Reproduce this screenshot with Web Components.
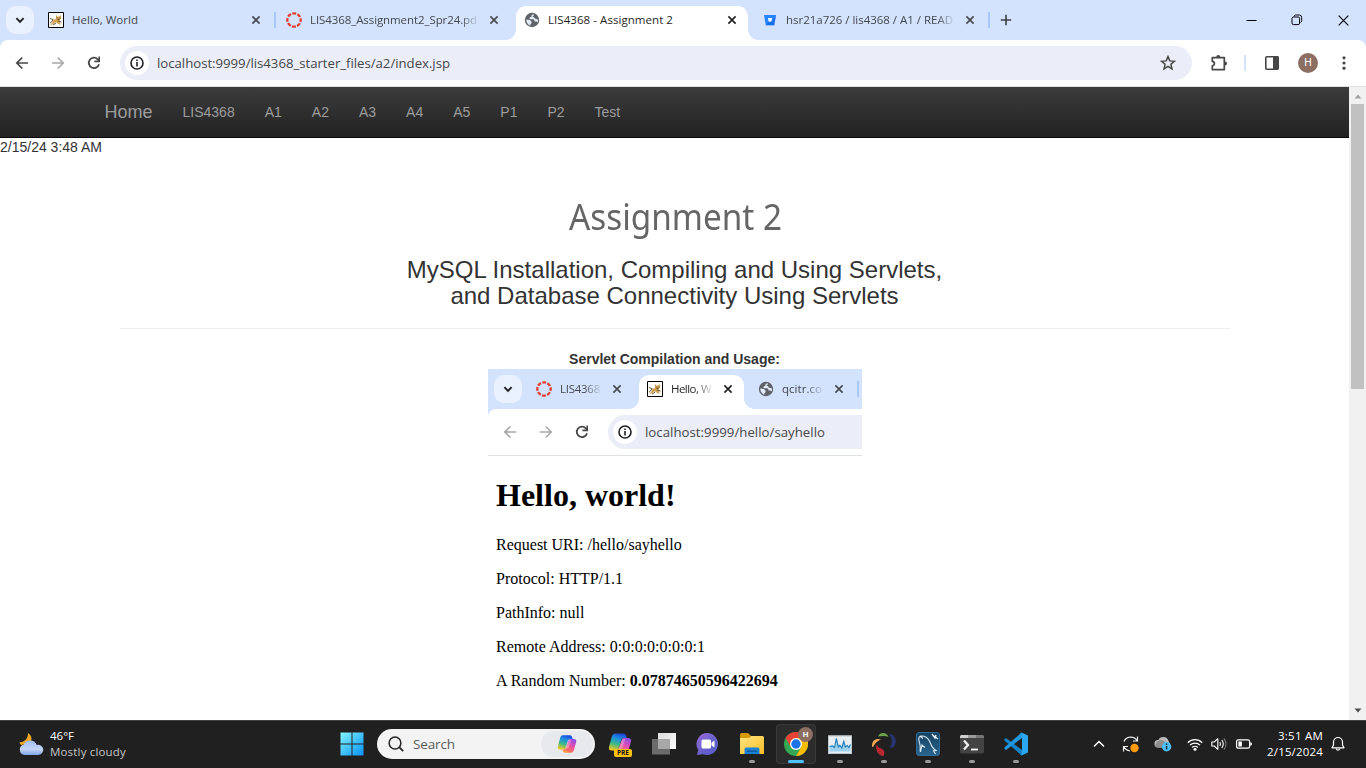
<!DOCTYPE html>
<html lang="en">
<head>
<meta charset="utf-8">
<title>LIS4368 - Assignment 2</title>
<style>
html,body{margin:0;height:100%;overflow:hidden;background:#fff}
</style>
</head>
<body>
<desktop-screen></desktop-screen>
<script>
const UI = '"Open Sans","Noto Sans",sans-serif';

const define = (name, css, html, ready) => {
  const tpl = document.createElement('template');
  tpl.innerHTML = `<style>*{box-sizing:border-box}${css}</style>${html}`;
  customElements.define(name, class extends HTMLElement {
    connectedCallback() {
      if (this.shadowRoot) return;
      this.attachShadow({mode: 'open'}).appendChild(tpl.content.cloneNode(true));
      if (ready) ready(this, this.shadowRoot);
    }
  });
};

/* Icons: name -> [width, height, markup] */
const copilot = `
  <path d="M7 1.500h8.500q2 0 2.600 2l.7 2.500h-2.800q-2.200 0-2.900 2.200L10.500 16.500Q9.800 18.500 8 18.500H4Q.2 18.500 1 15L4 4Q4.800 1.500 7 1.500z" fill="url(#cpa)"/>
  <path d="M17 22.500H9.500q-2 0-2.600-2l-.5-2H8q2.200 0 2.900-2.200l2.700-8.100Q14.300 6 16 6h4q3.800 0 3 3.500L20 20Q19.200 22.500 17 22.500z" fill="url(#cpb)"/>
  <path d="M14.500 6.800h2.800L14.700 15q-.8 2.600-2.800 2.600H9.500z" fill="#fff" opacity=".28"/>
  <defs><linearGradient id="cpa" x1=".6" y1="0" x2=".3" y2="1"><stop offset="0" stop-color="#1b49d6"/><stop offset=".3" stop-color="#1d8fe0"/><stop offset=".62" stop-color="#3ab98a"/><stop offset="1" stop-color="#f4c91d"/></linearGradient>
  <linearGradient id="cpb" x1=".8" y1="0" x2=".3" y2="1"><stop offset="0" stop-color="#8d4be8"/><stop offset=".45" stop-color="#e64fae"/><stop offset=".8" stop-color="#fa6d63"/><stop offset="1" stop-color="#ff9d4a"/></linearGradient></defs>`;
const ICONS = {
  chev: [12, 12, '<path d="M2.400 4.200 6 7.800l3.600-3.600" fill="none" stroke="#1f1f1f" stroke-width="1.900"/>'],
  close: [10, 10, '<path d="m1.400 1.400 7.200 7.200m0-7.200L1.400 8.600" stroke="currentColor" stroke-width="1.600"/>'],
  plus: [12, 12, '<path d="M6 .8v10.400M.8 6h10.400" stroke="#3c4043" stroke-width="1.600"/>'],
  back: [14, 14, '<path d="M13 7H2M7.300 1.500 1.800 7l5.500 5.500" fill="none" stroke="currentColor" stroke-width="1.700"/>'],
  fwd: [14, 14, '<path d="M1 7h11M6.700 1.500 12.200 7l-5.500 5.500" fill="none" stroke="#a8a8a8" stroke-width="1.700"/>'],
  reload: [14, 14, '<path d="M12 8.200A5.200 5.200 0 1 1 10.800 3.300L12.600 5" fill="none" stroke="#474747" stroke-width="1.800"/><path d="M13 .6v5.600H7.400V4.600h4V.6z" fill="#474747"/>'],
  info: [14, 14, '<circle cx="7" cy="7" r="6" fill="none" stroke="#202124" stroke-width="1.600"/><path d="M7 6.100v4.300M7 3.500v1.600" stroke="#202124" stroke-width="1.600"/>'],
  star: [16, 16, '<path d="m8 1.600 1.800 4.300 4.600.4-3.500 3 1.100 4.600L8 11.400l-4 2.500 1.100-4.600-3.500-3 4.600-.4z" fill="none" stroke="#474747" stroke-width="1.500"/>'],
  puzzle: [18, 18, '<path d="M2.300 3.600h12v12h-12v-3.800c2.800-.4 2.800-4 0-4.400z" fill="none" stroke="#474747" stroke-width="1.700" stroke-linejoin="round"/><path d="M6.300 3a2 2 0 0 1 4 0zM15 7.500a2 2 0 0 1 0 4z" fill="#474747"/>'],
  panel: [16, 16, '<rect x="1.800" y="1.800" width="12.400" height="12.400" rx="1" fill="none" stroke="#474747" stroke-width="1.600"/><path d="M9 1.500h5.500v13H9z" fill="#474747"/>'],
  dots: [4, 16, '<g fill="#474747"><circle cx="2" cy="2.800" r="1.600"/><circle cx="2" cy="8" r="1.600"/><circle cx="2" cy="13.200" r="1.600"/></g>'],
  min: [11, 11, '<path d="M.5 5.500h10" stroke="#000"/>'],
  restore: [12, 12, '<rect x="1" y="3" width="7.600" height="7.600" rx="1.500" fill="none" stroke="#000"/><path d="M3 2.600C3.200 1.500 3.800 1 5 1h3.200Q10.700 1 10.700 3.500v3Q10.700 8 9.500 8.600" fill="none" stroke="#000"/>'],
  winx: [11, 11, '<path d="m.7.7 9.600 9.600m0-9.600L.7 10.300" stroke="#000" stroke-width="1.100"/>'],
  tomcat: [16, 16, '<path d="M.5.500h15v15H.5z" fill="#fff" stroke="#000"/><path d="M8 3l1.300 1.500h2L13 3l.2 3.400L11.800 8l.8 4.800-2-.6L8 10.200 4.500 12.600 2 13l2.600-2.500.8-2.800L7.900 7z" fill="#d2a352"/><path d="M2 6.500 5 7.600 3.600 10 2 11.200M5 13l3-1.700M9 5.500l1 1.200M12 5.500v1M9.500 7.600l2-.2M10 9l3.500 1" fill="none" stroke="#594a31" stroke-width=".9"/>'],
  canvas: [16, 16, '<circle cx="8" cy="8" r="6.700" fill="none" stroke="#e43d30" stroke-width="2.300" stroke-dasharray="3.860 1.402" stroke-dashoffset="1.930"/>'],
  globe: [16, 16, '<circle cx="8" cy="8" r="7.200" fill="#5f6368"/><path d="M8.800 2.300 7.400 3.400v1.300L5.600 5.500v1.700h3.900l1 1.300v1h2.100l1 .9q.5-1.200.5-2.600L12.500 7l-1.800-.4-.7-1.600-1.600.1 1.800-2.400zM2.200 7.600l3.600.4 1.700 1.600v1.600l-1.100 1v1.600Q2.300 12 2.200 7.600z" fill="#e4ecfa"/>'],
  bucket: [16, 16, '<path d="M2 3h12l-1.800 10.300H3.800z" fill="#2684ff"/><path d="M9.600 10.300 14 3.200 12.200 13.300H3.800l2.600-3z" fill="#0d5fe0" opacity=".55"/><path d="M6 6h4l-.6 3.600H6.600z" fill="#fff"/>'],
  up: [8, 5, '<path d="M4 .5 7.500 4.500h-7z" fill="#a3a3a3"/>'],
  down: [8, 5, '<path d="M.5.500h7L4 4.500z" fill="#505050"/>'],
  weather: [26, 26, '<path d="M10 2c4 2.500 4.500 7 2 10L3 14 1.200 11.500C6 11.500 10 8 10 2z" fill="#f5a623"/><path d="M6.500 24a5.300 5.300 0 0 1-.7-10.400A7 7 0 0 1 18.800 14 5.100 5.100 0 1 1 20 24z" fill="url(#wc)"/><defs><linearGradient id="wc" x1="0" y1="0" x2="0" y2="1"><stop stop-color="#9fbdf0"/><stop offset=".6" stop-color="#c4d6f7"/><stop offset="1" stop-color="#7fa4e8"/></linearGradient></defs>'],
  windows: [24, 24, '<path d="M.5.500h11v11H.5zM12.500.5h11v11h-11zM.5 12.500h11v11H.5zM12.500 12.500h11v11h-11z" fill="url(#wl)"/><defs><linearGradient id="wl" x1="0" y1="0" x2="1" y2="1"><stop stop-color="#84f5ff"/><stop offset=".5" stop-color="#43c2fb"/><stop offset="1" stop-color="#0692f5"/></linearGradient></defs>'],
  search: [16, 16, '<circle cx="7" cy="7" r="5.900" fill="none" stroke="#262626" stroke-width="1.500"/><path d="m11.200 11.200 4 4" stroke="#262626" stroke-width="1.800"/>'],
  copilot: [24, 24, copilot],
  taskview: [24, 24, '<path d="M6 1h18v16H6z" fill="url(#tv)"/><path d="M0 7h18v15.500H0z" fill="#737373" opacity=".9"/><path d="M6 7h12v10H6z" fill="#a7a7a7"/><defs><linearGradient id="tv" x1="0" y1="0" x2="1" y2="1"><stop stop-color="#ddd"/><stop offset="1" stop-color="#fff"/></linearGradient></defs>'],
  chat: [24, 24, '<path d="M12 1A11 11 0 1 1 7 22.200L1 23l1.200-5.200A11 11 0 0 1 12 1z" fill="url(#ch)"/><rect x="5.500" y="7.500" width="9.500" height="9" rx="1.500" fill="#fff"/><path d="m15.500 10.800 3-2.200v7l-3-2.200z" fill="#fff"/><defs><linearGradient id="ch" x1="0" y1="0" x2="1" y2="1"><stop stop-color="#9c6ade"/><stop offset=".5" stop-color="#6c62cc"/><stop offset="1" stop-color="#5059c9"/></linearGradient></defs>'],
  explorer: [24, 24, '<path d="M0 5V2.500Q0 1 1.500 1H8l3 3-2 3H0z" fill="#d69a08"/><path d="M0 6h9l2-2h11.500Q24 4 24 5.500V22H0z" fill="url(#ex)"/><path d="M4.500 22v-4.500q0-2 2-2h11q2 0 2 2V22z" fill="#1c82d4"/><path d="M8 18.500h8q1.500 0 1.500 1.500H6.500q0-1.500 1.500-1.500z" fill="#075a9f"/><defs><linearGradient id="ex" x1="0" y1="0" x2="1" y2="1"><stop stop-color="#ffe583"/><stop offset="1" stop-color="#f9bd25"/></linearGradient></defs>'],
  chrome: [24, 24, '<circle cx="12" cy="12" r="12" fill="#34a853"/><path d="M1.600 6A12 12 0 0 1 22.400 6L12 6.500 6.800 15z" fill="#ea4335"/><path d="M22.400 6A12 12 0 0 1 12 24l5.200-9L12 6z" fill="#fbbc04"/><circle cx="12" cy="12" r="6" fill="#fff"/><circle cx="12" cy="12" r="4.700" fill="#1a73e8"/>'],
  taskman: [24, 24, '<path d="M0 3.500h24V22H0z" fill="#e9eef2"/><path d="M1.500 19.500V14l3-.5 2 1L8.500 6l2 7.500 2-1 1.500 3 2-5.500 1.500 4 2-1 1.500 1.500 1.500-2v7z" fill="#9fd3f0"/><path d="M1.500 14.500 4.500 14l2 1.500L8.300 6.500l2 8.500 1.500-1.500 2 2.500 2-6.500 1.500 5.500 2-1.500 1.500 2 1.700-3" fill="none" stroke="#2582be" stroke-width="1.200"/><path d="M.5 4h23v17.500H.5z" fill="none" stroke="#bfc6ca"/>'],
  swirl: [24, 24, '<path d="M6 4.500C8-.5 15 0 16.500 5c-3-1.500-7-1.300-10.500-.5z" fill="#6fa348"/><path d="M16.500 2C23 1.500 26 9 22 14.500c-2 2-3 1.500-4.500.5C21 11 20.500 5.500 16.500 2z" fill="#293570"/><path d="M0 15C-.5 9 3 5.500 9.500 7.500 6 8 3 11.500 1.500 14.500z" fill="#eda450"/><path d="M5 12c.5 5 5 3.500 6.800 6.500 1 2 .5 4-.5 5.500C6 24 2.500 17 5 12z" fill="#bb2730"/>'],
  mysql: [24, 24, '<rect x=".5" y=".5" width="23" height="23" rx="2.500" fill="url(#my)" stroke="#306b94"/><path d="M4.500 20c-1-3 .5-5-.8-8.500C2.500 8 2 4.500 5 4c3-.2 6.500 1.500 8.500 5 1 2.500 2 6 4.500 8l2 1.500-2.500.2L19.500 22M9 15.500 6 13l-1.500 7M4 4l3 2.500" fill="none" stroke="#dce8f0" stroke-width="1.100"/><path d="m16 2 3 4 1-3M18 4l4 3" stroke="#e6eff5" stroke-width="1.400" fill="none"/><defs><linearGradient id="my" x1="0" y1="0" x2="0" y2="1"><stop stop-color="#15405f"/><stop offset="1" stop-color="#286590"/></linearGradient></defs>'],
  terminal: [24, 24, '<rect y="3" width="24" height="18.500" rx="1.500" fill="#434343"/><path d="M0 6V4.500Q0 3 1.500 3H8v3z" fill="#cfcfcf"/><path d="M8 3h8v3H8z" fill="#9b9b9b"/><path d="M16 3h6.500Q24 3 24 4.500V6h-8z" fill="#777"/><path d="m4 8.500 4 4.500-4 4.500" fill="none" stroke="#eee" stroke-width="2.300"/><path d="M11 17.500h7" stroke="#fff" stroke-width="1.800"/>'],
  vscode: [24, 24, '<path d="M17.500.5 24 3.500v17l-6.500 3-1.500-1 2-1.500V4L16 2z" fill="#2aa8f2"/><path d="M0 7.800 2 6l16 12v5L16.500 22.500 1.500 9.500z" fill="#1583c8"/><path d="M0 16.200 2 18 18 6V.7L16.500 1.500 1.500 14.500z" fill="#2398dd"/>'],
  chevup: [12, 8, '<path d="m1 6.500 5-5 5 5" fill="none" stroke="#fff" stroke-width="1.500"/>'],
  sync: [18, 18, '<path d="M2 6.500C4 1 12 .5 15 5.500M15.500 1.500V6H11M1.500 16.500v-5H6M2 12q2 3.500 6 4" fill="none" stroke="#eee" stroke-width="1.200"/><circle cx="12.500" cy="13" r="4.200" fill="#ff9a0c"/>'],
  cloud: [18, 16, '<path d="M4 11.500a3.700 3.700 0 0 1 .3-7.400A5.500 5.500 0 0 1 14.500 5L16 8v3.500z" fill="#b9b9b9"/><path d="M1 9Q5 2 10 5l6 4-2 2.500H4Q1 11.500 1 9z" fill="#8e8e8e"/><circle cx="12.600" cy="10.700" r="4.700" fill="#4dbdf6"/><path d="M12.600 10v3.500M12.600 7.600v1.500" stroke="#15323f" stroke-width="1.400"/>'],
  wifi: [16, 13, '<path d="M.8 4.700a10.200 10.200 0 0 1 14.400 0M3 7.200a7 7 0 0 1 10 0M5.200 9.500a4 4 0 0 1 5.600 0" fill="none" stroke="#fff" stroke-width="1.200"/><circle cx="8" cy="11.200" r="1.500" fill="#fff"/>'],
  vol: [16, 14, '<path d="M.8 5v4h2.400l3.600 3.300V1.700L3.200 5z" fill="none" stroke="#fff" stroke-width="1.100" stroke-linejoin="round"/><path d="M8.800 5q1.400 2 0 4M10.800 3q2.900 4 0 8" fill="none" stroke="#fff" stroke-width="1.100"/><path d="M12.900 1.300q4.200 5.700 0 11.400" fill="none" stroke="#777" stroke-width="1.100"/>'],
  bat: [16, 10, '<rect x=".6" y=".8" width="13" height="8.400" rx="1.700" fill="none" stroke="#fff" stroke-width="1.200"/><path d="M2.400 2.600h3.500v4.800H2.400zM14.200 3.200q1.800 0 1.800 1.800t-1.800 1.800z" fill="#fff"/>'],
  bell: [14, 16, '<path d="M1 11.800 2.500 9V6a4.500 4.500 0 0 1 9 0v3l1.500 2.800z" fill="none" stroke="#fff" stroke-width="1.200" stroke-linejoin="round"/><path d="M5 12.500q2 3.500 4 0" fill="none" stroke="#fff" stroke-width="1.200"/>']
};

define('ui-icon', ':host{display:block;flex:none;line-height:0}svg{display:block}', '', (el, root) => {
  const [w, h, body] = ICONS[el.getAttribute('name')];
  const size = +el.getAttribute('size') || w;
  root.innerHTML += `<svg width="${size}" height="${size * h / w}" viewBox="0 0 ${w} ${h}">${body}</svg>`;
});

/* Text set to a fixed measure given in its w attribute: tracked, or condensed with [condense] */
define('fit-text', ':host{display:block;flex:none;white-space:pre}span{display:inline-block;transform-origin:0 50%}', '<span></span>', (el, root) => {
  const span = root.querySelector('span');
  span.textContent = el.getAttribute('text');
  const w = +el.getAttribute('w');
  const natural = span.getBoundingClientRect().width;
  if (el.hasAttribute('condense')) span.style.transform = `scaleX(${w / natural})`;
  else span.style.letterSpacing = (w - natural) / span.textContent.length + 'px';
  el.style.width = w + 'px';
});

const ownIcon = (el, root) => {
  root.querySelector('.i').innerHTML = `<ui-icon name="${el.getAttribute('icon')}"></ui-icon>`;
};

define('browser-tab', `
:host{display:flex;align-items:center;flex:none;position:relative;width:232px;height:34px;padding:0 8px 6px;color:#44484c;font:11.5px/16px ${UI}}
:host([active]){background:#fff;border-radius:10px 10px 0 0;color:#1f1f1f}
:host([active])::before,:host([active])::after{content:"";position:absolute;bottom:0;width:10px;height:10px}
:host([active])::before{left:-10px;background:radial-gradient(circle at 0 0,transparent 9.500px,#fff 10px)}
:host([active])::after{right:-10px;background:radial-gradient(circle at 100% 0,transparent 9.500px,#fff 10px)}
.i{width:16px;height:16px}
.t{flex:1;min-width:0;margin:0 9px 0 8px}
.t.fade{-webkit-mask-image:linear-gradient(90deg,#000 calc(100% - 16px),rgba(0,0,0,.15));mask-image:linear-gradient(90deg,#000 calc(100% - 16px),rgba(0,0,0,.15))}
.x{width:16px;display:flex;justify-content:center}`,
'<div class="i"></div><div class="t"></div><div class="x"><ui-icon name="close"></ui-icon></div>', (el, root) => {
  ownIcon(el, root);
  const t = root.querySelector('.t');
  t.innerHTML = `<fit-text w="${el.getAttribute('w')}" text="${el.getAttribute('label')}"></fit-text>`;
  if (el.hasAttribute('fade')) t.classList.add('fade');
});

define('tab-gap', ':host{display:flex;flex:none;width:6px;height:34px;padding:6px 2px 0}i{width:2px;height:16px;background:transparent}:host([bar]) i{background:#a8c7fa}', '<i></i>');

define('tab-strip', `
:host{display:flex;align-items:flex-start;height:40px;padding:6px 0 0 6px;background:#d3e3fd}
.menu{width:28px;height:28px;border-radius:10px;background:#e9f1fe;display:flex;align-items:center;justify-content:center;margin-right:6px;flex:none}`,
'<div class="menu"><ui-icon name="chev"></ui-icon></div><slot></slot>');

define('win-controls', ':host{display:flex;margin-left:auto;margin-top:-6px}div{width:46px;height:40px;display:flex;align-items:center;justify-content:center}',
'<div><ui-icon name="min"></ui-icon></div><div><ui-icon name="restore"></ui-icon></div><div><ui-icon name="winx"></ui-icon></div>');

define('tool-bar', `
:host{display:block;background:#d3e3fd;color:#474747}
.b{display:flex;align-items:center;height:47px;padding:1px 0 1px 4px;background:#fff;border-bottom:1px solid #dfe1e2;border-radius:8px 8px 0 0}
:host([clip]) .b{border-top-right-radius:0}
.n{width:36px;display:flex;justify-content:center}
:host([dim]) .n:first-child{color:#a8a8a8}
.o{flex:1;margin-left:8px;height:34px;border-radius:17px;background:#ebeef8;display:flex;align-items:center;padding-left:5px;font:13.200px/18px ${UI};color:#474747}
:host([clip]) .o{border-radius:17px 0 0 17px}
.c{width:24px;height:24px;border-radius:12px;background:#fff;display:flex;align-items:center;justify-content:center;margin-right:8px}`,
`<div class="b"><div class="n"><ui-icon name="back"></ui-icon></div><div class="n"><ui-icon name="fwd"></ui-icon></div><div class="n"><ui-icon name="reload"></ui-icon></div>
<div class="o"><div class="c"><ui-icon name="info"></ui-icon></div><slot></slot></div><slot name="end"></slot></div>`);

define('tool-actions', `
:host{display:flex;align-items:center;width:174px;padding-left:18px}
.bar{width:2px;height:16px;background:#d3e3fd;margin:0 18px 0 16px}
.av{width:20px;height:20px;border-radius:10px;background:#8d6e63;color:#fff;font:10.500px/20px Roboto,sans-serif;text-align:center;margin:0 24px 0 18px}`,
'<ui-icon name="puzzle"></ui-icon><div class="bar"></div><ui-icon name="panel"></ui-icon><div class="av">H</div><ui-icon name="dots"></ui-icon>');

define('nav-bar', `
:host{display:block;height:51px;background:linear-gradient(#3c3c3c,#222);border-bottom:1px solid #080808}
div{display:flex;width:1170px;margin:0 auto;font:14px/20px "Liberation Sans",Arial,sans-serif;color:#9d9d9d}
span{padding:15px}.h{font-size:18px}`,
'<div><span class="h">Home</span><span>LIS4368</span><span>A1</span><span>A2</span><span>A3</span><span>A4</span><span>A5</span><span>P1</span><span>P2</span><span>Test</span></div>');

define('servlet-shot', `
:host{display:block;width:374px;height:351px;margin:0 auto;overflow:hidden;background:#fff;text-align:left}
browser-tab{width:105px}
.p{padding:0 8px;font:16px/18px "Liberation Serif","Times New Roman",serif;color:#000}
h2{font-size:32px;line-height:37px;margin:21px 0 22px}p{margin:0 0 16px}`,
`<tab-strip><browser-tab icon="canvas" label="LIS4368" w="40" fade></browser-tab><tab-gap></tab-gap><browser-tab icon="tomcat" label="Hello, W" w="40" active fade></browser-tab><tab-gap></tab-gap><browser-tab icon="globe" label="qcitr.co" w="40" fade></browser-tab><tab-gap bar></tab-gap></tab-strip>
<tool-bar clip dim><fit-text w="180" text="localhost:9999/hello/sayhello"></fit-text></tool-bar>
<div class="p"><h2>Hello, world!</h2><p>Request URI: /hello/sayhello</p><p>Protocol: HTTP/1.1</p><p>PathInfo: null</p><p>Remote Address: 0:0:0:0:0:0:0:1</p><p>A Random Number: <b>0.07874650596422694</b></p></div>`);

define('assignment-page', `
:host{display:block;width:1349px;height:633px;overflow:hidden;background:#fff;font:14px/20px "Liberation Sans",Arial,sans-serif;color:#333}
.d{height:20px;line-height:19px}
.m{width:1110px;margin:39px 0 0 120px;text-align:center}
h1{font:36px/40px "Noto Sans","Open Sans",sans-serif;color:#666;margin:0 0 20px;display:flex;justify-content:center;text-align:left}
h3{font-size:24px;line-height:26.400px;font-weight:400;margin:0}
hr{border:0;border-top:1px solid #eee;margin:18px 0 20px}
h3,b{position:relative;left:-.5px}
b{display:block}`,
`<nav-bar></nav-bar><div class="d">2/15/24 3:48 AM</div>
<div class="m"><h1><fit-text condense w="213" text="Assignment 2"></fit-text></h1><h3>MySQL Installation, Compiling and Using Servlets,<br>and Database Connectivity Using Servlets</h3><hr><b>Servlet Compilation and Usage:</b><servlet-shot></servlet-shot></div>`);

define('scroll-bar', `
:host{display:flex;flex-direction:column;align-items:center;width:17px;height:633px;background:#f1f1f1;padding:7px 0}
div{width:13px;height:285px;background:#c1c1c1;margin:5px 0 auto}`,
'<ui-icon name="up"></ui-icon><div></div><ui-icon name="down"></ui-icon>');

define('task-app', `
:host{display:flex;flex-direction:column;align-items:center;position:relative;width:40px;height:40px;margin:0 2px;padding-top:8px;border-radius:4px}
:host([on]){background:#2c2c2c;box-shadow:inset 0 0 0 1px #383838}
.i{width:24px;height:24px}
.r{display:none;position:absolute;bottom:1px;width:6px;height:3px;border-radius:2px;background:#9a9a9a}
:host([run]) .r{display:block}:host([on]) .r{width:16px;background:#4cc2ff}`,
'<div class="i"></div><div class="r"></div><slot></slot>', ownIcon);

define('search-box', `
:host{display:flex;align-items:center;width:218px;height:30px;border-radius:15px;background:#f3f3f3;padding:0 2px 0 11px;color:#5c5c5c;font:13.500px/20px ${UI}}
fit-text{margin-left:9px}
.c{width:52px;height:26px;border-radius:13px;background:#e7e9ec;display:flex;align-items:center;justify-content:center;margin-left:auto}`,
'<ui-icon name="search"></ui-icon><fit-text w="42" text="Search"></fit-text><div class="c"><ui-icon name="copilot" size="20"></ui-icon></div>');

define('task-bar', `
:host{display:flex;align-items:center;height:48px;background:#202020;border-top:1px solid #424442;padding-bottom:1px;color:#fff;font:11.500px/16px ${UI}}
.w{margin-left:6px}.w :last-child{color:#c6c6c6}
.s{margin-left:214px}
search-box{margin-left:13px}
.apps{display:flex;margin-left:3px}
.pre{position:absolute;left:14px;bottom:7px;width:18px;height:8px;border-radius:2px;background:#ffc20e;color:#111;font:bold 6.500px/8px "Open Sans",sans-serif;text-align:center}
.av{position:absolute;left:22px;top:3px;width:15px;height:15px;border-radius:8px;background:#8d6e63;color:#fff;font:bold 8px/15px Roboto,sans-serif;text-align:center}
.tray{display:flex;align-items:center;margin-left:auto;padding-right:21px}
.time{display:flex;flex-direction:column;align-items:flex-end;width:60px;margin:0 8px 0 11px}`,
`<ui-icon name="weather" style="margin-left:18px"></ui-icon><div class="w"><fit-text w="24" text="46°F"></fit-text><fit-text w="76" text="Mostly cloudy"></fit-text></div>
<ui-icon class="s" name="windows"></ui-icon><search-box></search-box>
<div class="apps"><task-app icon="copilot"><span class="pre">PRE</span></task-app><task-app icon="taskview"></task-app><task-app icon="chat"></task-app><task-app icon="explorer" run></task-app><task-app icon="chrome" on run><span class="av">H</span></task-app><task-app icon="taskman" run></task-app><task-app icon="swirl" run></task-app><task-app icon="mysql" run></task-app><task-app icon="terminal" run></task-app><task-app icon="vscode" run></task-app></div>
<div class="tray"><ui-icon name="chevup" style="margin-right:17px"></ui-icon><ui-icon name="sync" style="margin-right:14px"></ui-icon><ui-icon name="cloud" style="margin-right:15px"></ui-icon><ui-icon name="wifi" style="margin-right:8px"></ui-icon><ui-icon name="vol" style="margin-right:9px"></ui-icon><ui-icon name="bat"></ui-icon>
<div class="time"><fit-text w="45" text="3:51 AM"></fit-text><fit-text w="56" text="2/15/2024"></fit-text></div><ui-icon name="bell"></ui-icon></div>`);

define('desktop-screen', `
:host{display:block;width:1366px;height:768px;overflow:hidden}
.v{display:flex;height:633px}
.plus{margin:8px 0 0 8px}`,
`<tab-strip><browser-tab icon="tomcat" label="Hello, World" w="66"></browser-tab><tab-gap bar></tab-gap><browser-tab icon="canvas" label="LIS4368_Assignment2_Spr24.pd" w="167" fade></browser-tab><tab-gap></tab-gap><browser-tab icon="globe" label="LIS4368 - Assignment 2" w="125" active></browser-tab><tab-gap></tab-gap><browser-tab icon="bucket" label="hsr21a726 / lis4368 / A1 / READ" w="167" fade></browser-tab><tab-gap bar></tab-gap><ui-icon class="plus" name="plus"></ui-icon><win-controls></win-controls></tab-strip>
<tool-bar><fit-text w="293" text="localhost:9999/lis4368_starter_files/a2/index.jsp"></fit-text><div style="margin:0 16px 0 auto"><ui-icon name="star"></ui-icon></div><tool-actions slot="end"></tool-actions></tool-bar>
<div class="v"><assignment-page></assignment-page><scroll-bar></scroll-bar></div><task-bar></task-bar>`);
</script>
</body>
</html>
